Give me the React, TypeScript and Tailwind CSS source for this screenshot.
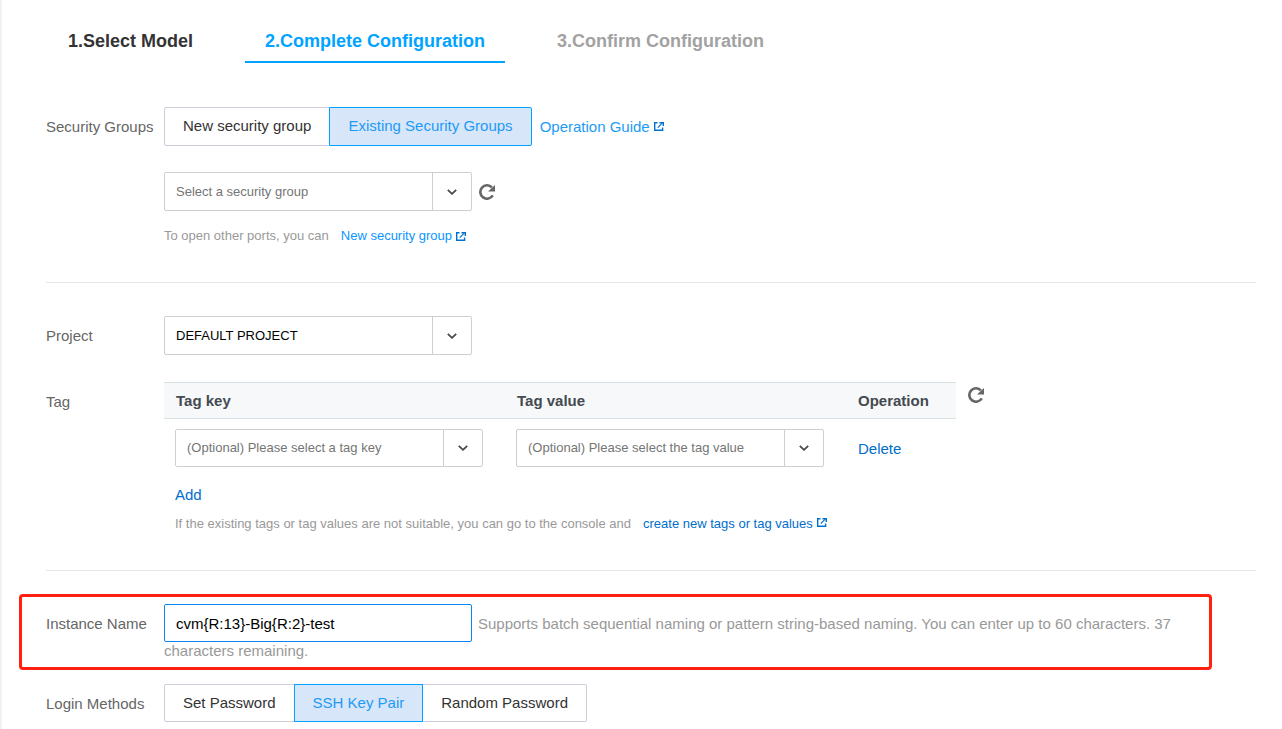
import { useState } from "react";
import type { ReactNode } from "react";

function ChevronIcon() {
  return (
    <svg width="10" height="6" viewBox="0 0 10 6" fill="none" aria-hidden="true">
      <path d="M0.8 0.8 L5 4.8 L9.2 0.8" stroke="#444a52" strokeWidth="1.8" />
    </svg>
  );
}

function RefreshIcon() {
  return (
    <svg width="16" height="16" viewBox="0 0 16 16" fill="none" aria-hidden="true">
      <path d="M13.8 11.4 A6.7 6.7 0 1 1 12.9 3.4" stroke="#666" strokeWidth="2.6" />
      <path d="M16 1 V7.4 H9 Z" fill="#666" />
    </svg>
  );
}

function ExternalIcon() {
  return (
    <svg width="10" height="9" viewBox="0 0 10 9" fill="none" stroke="#0071ce" aria-hidden="true">
      <path d="M3.5 0.7 H0.7 V8.3 H8.6 V5.5" strokeWidth="1.4" />
      <path d="M3.8 5.6 L8.2 1.2" strokeWidth="1.2" />
      <path d="M5.5 0.7 H9.3 V4" strokeWidth="1.4" />
    </svg>
  );
}

type SelectBoxProps = {
  id: string;
  options: string[];
  label?: string;
  className?: string;
};

function SelectBox({ id, options, label, className }: SelectBoxProps) {
  return (
    <div className={`relative w-[308px] rounded-xs border border-[#cfcfcf] bg-white text-[13px] ${className ?? ""}`}>
      <select
        id={id}
        aria-label={label}
        className="block h-full w-full appearance-none bg-transparent pl-[11px] pr-10 outline-none"
      >
        {options.map((option) => (
          <option key={option}>{option}</option>
        ))}
      </select>
      <span className="pointer-events-none absolute inset-y-0 right-0 flex w-[39px] items-center justify-center border-l border-[#cfcfcf]">
        <ChevronIcon />
      </span>
    </div>
  );
}

type SegmentedProps = {
  label: string;
  options: string[];
  initial: string;
  className: string;
};

function Segmented({ label, options, initial, className }: SegmentedProps) {
  const [value, setValue] = useState(initial);
  return (
    <div role="group" aria-label={label} className={`flex ${className}`}>
      {options.map((option) => (
        <button
          key={option}
          type="button"
          aria-pressed={option === value}
          onClick={() => setValue(option)}
          className={`-ml-px border px-[18px] pb-px first:ml-0 first:rounded-l-xs last:rounded-r-xs ${
            option === value
              ? "z-10 border-[#00a4ff] bg-[#d8e6f9] text-[#1d9bf5]"
              : "border-[#ccced9] bg-white text-[#333]"
          }`}
        >
          {option}
        </button>
      ))}
    </div>
  );
}

type RowProps = {
  label: string;
  htmlFor?: string;
  className?: string;
  children: ReactNode;
};

function Row({ label, htmlFor, className, children }: RowProps) {
  const labelClass = "w-[118px] shrink-0 text-[#666] leading-[39px]";
  return (
    <div className={`flex items-start ${className ?? ""}`}>
      {htmlFor ? (
        <label htmlFor={htmlFor} className={labelClass}>
          {label}
        </label>
      ) : (
        <div className={labelClass}>{label}</div>
      )}
      <div className="min-w-0 flex-1">{children}</div>
    </div>
  );
}

const steps = [
  { title: "1.Select Model", tone: "border-transparent text-[#333]" },
  { title: "2.Complete Configuration", tone: "border-[#00a4ff] text-[#00a4ff]" },
  { title: "3.Confirm Configuration", tone: "border-transparent text-[#a2a2a2]" },
];

export default function App() {
  const [name, setName] = useState("cvm{R:13}-Big{R:2}-test");

  return (
    <main className="min-h-screen border-l-2 border-[#f0f0f6] bg-white pb-[7px] pl-11 pr-[26px] pt-[22px] font-['Liberation_Sans',Arial,sans-serif] text-[15px] leading-5">
      <ol className="flex gap-8 pl-0.5 text-[18px] font-bold">
        {steps.map((step) => (
          <li key={step.title} className={`border-b-2 px-5 leading-[39px] ${step.tone}`}>
            {step.title}
          </li>
        ))}
      </ol>

      <Row label="Security Groups" className="mt-11">
        <div className="flex items-center gap-2">
          <Segmented
            label="Security Groups"
            options={["New security group", "Existing Security Groups"]}
            initial="Existing Security Groups"
            className="h-[39px]"
          />
          <a href="#guide" className="flex items-center gap-1 text-[#1d9bf5]">
            Operation Guide
            <ExternalIcon />
          </a>
        </div>
        <div className="mt-[26px] flex items-center gap-[7px]">
          <SelectBox
            id="security-group"
            label="Security group"
            options={["Select a security group"]}
            className="h-[39px] text-[#757575]"
          />
          <button type="button" aria-label="Refresh security groups">
            <RefreshIcon />
          </button>
        </div>
        <p className="mt-[15px] flex gap-3 text-[13px] text-[#999]">
          To open other ports, you can
          <a href="#new-group" className="flex items-center gap-1 text-[#0a95ff]">
            New security group
            <ExternalIcon />
          </a>
        </p>
      </Row>

      <hr className="mt-9 border-[#e5e5ea]" />

      <Row label="Project" htmlFor="project" className="mt-[33px]">
        <SelectBox id="project" options={["DEFAULT PROJECT"]} className="h-[39px] text-black" />
      </Row>

      <Row label="Tag" className="mt-[27px]">
        <div className="flex items-start gap-3">
          <table className="w-[792px] table-fixed text-left">
            <thead>
              <tr className="h-9 border-y border-[#dae1e4] bg-[#f7f8fa] text-[#444a50]">
                <th className="w-[341px] pl-3">Tag key</th>
                <th className="w-[341px] pl-3">Tag value</th>
                <th className="pl-3">Operation</th>
              </tr>
            </thead>
            <tbody>
              <tr>
                <td className="pl-[11px] pt-2.5">
                  <SelectBox
                    id="tag-key"
                    label="Tag key"
                    options={["(Optional) Please select a tag key"]}
                    className="h-[38px] text-[#757575]"
                  />
                </td>
                <td className="pl-[11px] pt-2.5">
                  <SelectBox
                    id="tag-value"
                    label="Tag value"
                    options={["(Optional) Please select the tag value"]}
                    className="h-[38px] text-[#757575]"
                  />
                </td>
                <td className="pl-3 pt-3">
                  <button type="button" className="text-[#006ecc]">
                    Delete
                  </button>
                </td>
              </tr>
            </tbody>
          </table>
          <button type="button" aria-label="Refresh tags" className="mt-[5px]">
            <RefreshIcon />
          </button>
        </div>
        <div className="pl-[11px]">
          <button type="button" className="mt-[18px] block text-[#006ecc]">
            Add
          </button>
          <p className="mt-[9px] flex gap-3 text-[13px] text-[#999]">
            If the existing tags or tag values are not suitable, you can go to the console and
            <a href="#tags" className="flex gap-1 text-[#006ecc]">
              create new tags or tag values
              <span className="pt-1">
                <ExternalIcon />
              </span>
            </a>
          </p>
        </div>
      </Row>

      <hr className="mt-9 border-[#e5e5ea]" />

      <section className="-ml-[27px] mr-11 mt-[23px] rounded-sm border-3 border-[#ff2010] pb-[7px] pl-6 pt-[7px]">
        <Row label="Instance Name" htmlFor="instance-name">
          <p className="leading-[18px] text-[#999]">
            <input
              id="instance-name"
              type="text"
              value={name}
              onChange={(event) => setName(event.target.value)}
              className="mr-1.5 h-[38px] w-[308px] rounded-xs border border-[#0a84f0] px-[11px] align-baseline text-black outline-none"
            />
            Supports batch sequential naming or pattern string-based naming. You can enter up to 60 characters. 37
            characters remaining.
          </p>
        </Row>
      </section>

      <Row label="Login Methods" className="mt-3.5">
        <Segmented
          label="Login Methods"
          options={["Set Password", "SSH Key Pair", "Random Password"]}
          initial="SSH Key Pair"
          className="h-[38px]"
        />
      </Row>
    </main>
  );
}
